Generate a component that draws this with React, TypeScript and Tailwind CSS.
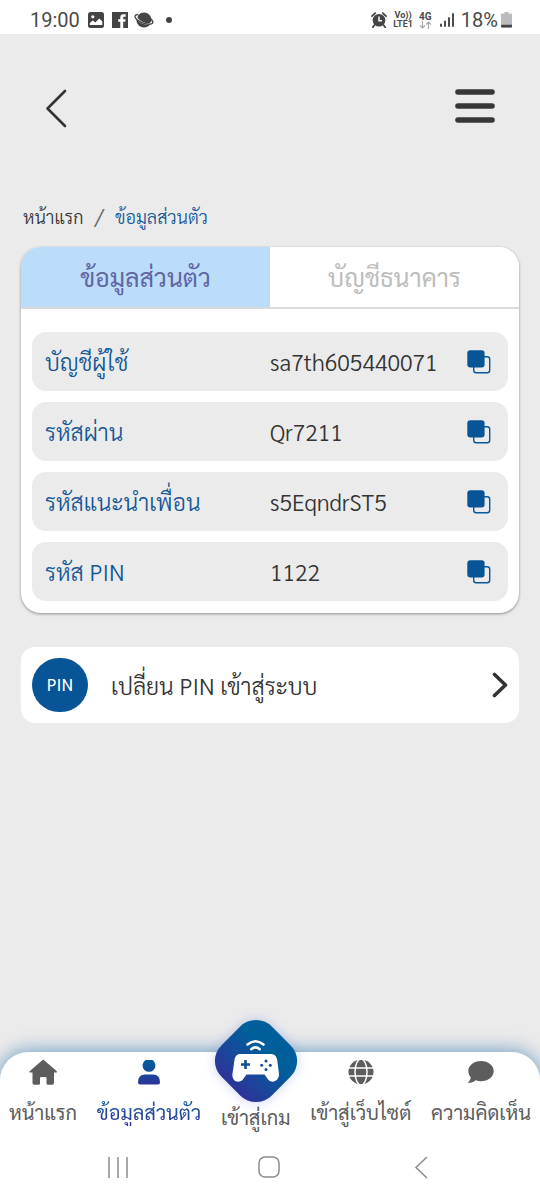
import { useState } from "react";

const accountRows = [
  { label: "บัญชีผู้ใช้", value: "sa7th605440071" },
  { label: "รหัสผ่าน", value: "Qr7211" },
  { label: "รหัสแนะนำเพื่อน", value: "s5EqndrST5" },
  { label: "รหัส PIN", value: "1122" },
];

function StatusBar() {
  return (
    <div className="flex h-[34px] items-center justify-between bg-white pt-[6px] pr-[28px] pl-[30px] font-[Roboto,sans-serif] text-[20px] font-normal text-[#4a4a4a]">
      <div className="flex items-center gap-[8px]">
        <span>19:00</span>
        <svg width="16" height="16" viewBox="0 0 16 16" aria-hidden="true">
          <rect width="16" height="16" rx="2.5" fill="#444" />
          <circle cx="4.8" cy="4.8" r="1.6" fill="#fff" />
          <path d="M1.8 13V11l3-2.5 2.5 2 4-4 3 3V13z" fill="#fff" />
        </svg>
        <svg width="16" height="16" viewBox="0 0 16 16" aria-hidden="true">
          <rect width="16" height="16" fill="#444" />
          <path d="M8.3 16V9.8H6.2V7.2h2.1V5.5C8.3 3.3 9.5 2.2 11.5 2.2h2.2v2.5h-1.4c-.8 0-1.1.4-1.1 1.1v1.4h2.4l-.4 2.6h-2V16z" fill="#fff" />
        </svg>
        <svg width="20" height="17" viewBox="0 0 20 17" className="-ml-[2px]" aria-hidden="true">
          <circle cx="10" cy="8" r="7.6" fill="#444" />
          <path d="M3.500 3.500C1 5 3.500 8.500 8.500 10.800c4.500 2 9 2 8.800-.8" fill="none" stroke="#fff" strokeWidth="1.800" />
          <path d="M4 2.500C.8 2.700-.2 4.500 2.500 7.200c3.500 3.500 11.500 6.200 15.300 4.500 2-1 .9-3.200-.8-4.800" fill="none" stroke="#444" strokeWidth="1.300" />
        </svg>
        <span className="ml-[4px] size-[6px] rounded-full bg-[#444]" />
      </div>
      <div className="flex items-center">
        <svg width="16" height="16" viewBox="0 0 16 16" aria-hidden="true">
          <circle cx="8" cy="8.300" r="6.300" fill="#444" />
          <path d="M1 4.200 4.200 1.200M15 4.200l-3.200-3M3.500 13l-1.700 2.200M12.500 13l1.700 2.200" stroke="#444" strokeWidth="1.800" strokeLinecap="round" />
          <path d="M8 4.500v4.200h3" stroke="#fff" strokeWidth="1.500" fill="none" />
        </svg>
        <span className="ml-[6px] flex flex-col items-center text-[9px] leading-[9px] font-bold">
          <span>Vo))</span>
          <span>LTE1</span>
        </span>
        <span className="ml-[6px] flex flex-col items-center text-[10px] leading-[9px] font-bold">
          <span>4G</span>
          <svg width="13" height="8" viewBox="0 0 13 8" fill="none" stroke="#aaa" strokeWidth="1.200" aria-hidden="true">
            <path d="M3.500 0v7M1 4.500 3.500 7 6 4.500M9.500 8V1M7 3.500 9.500 1 12 3.500" />
          </svg>
        </span>
        <svg className="ml-[8px]" width="14" height="14" viewBox="0 0 14 14" stroke="#444" strokeWidth="1.900" strokeLinecap="round" aria-hidden="true">
          <path d="M1 11.500V13M5 8.500V13M9 5v8M13 1v12" />
        </svg>
        <span className="ml-[7px]">18%</span>
        <svg className="ml-[3px]" width="11" height="16" viewBox="0 0 11 16" aria-hidden="true">
          <path d="M3.500 0h4v1.500H10q1 0 1 1V14.500q0 1-1 1H1q-1 0-1-1V2.500q0-1 1-1h2.500z" fill="#bbb" />
          <path d="M0 12.800h11v1.700q0 1-1 1H1q-1 0-1-1z" fill="#444" />
        </svg>
      </div>
    </div>
  );
}

function Header() {
  return (
    <header className="flex items-start justify-between px-[42px] pt-[48px]">
      <button type="button" aria-label="ย้อนกลับ" className="flex h-[52px] items-center pl-[3px]">
        <svg width="23" height="40" viewBox="0 0 23 40" fill="none" stroke="#333" strokeWidth="2.600" strokeLinecap="round" strokeLinejoin="round">
          <path d="M20 3 2.500 20.500 20 38" />
        </svg>
      </button>
      <button type="button" aria-label="เมนู" className="flex h-[48px] items-center pr-[3px]">
        <svg width="40" height="36" viewBox="0 0 40 36" stroke="#373737" strokeWidth="5.600" strokeLinecap="round">
          <path d="M3 4h34M3 18h34M3 32h34" />
        </svg>
      </button>
    </header>
  );
}

function CopyIcon() {
  return (
    <svg width="24" height="24" viewBox="0 0 24 24" aria-hidden="true">
      <rect x="6.700" y="6.700" width="16" height="16" rx="2.500" fill="none" stroke="#0b5796" strokeWidth="1.400" />
      <rect x="0.300" y="0.300" width="17.300" height="17.300" rx="3" fill="#075596" />
    </svg>
  );
}

function AccountCard() {
  const [tab, setTab] = useState(0);
  const tabs = ["ข้อมูลส่วนตัว", "บัญชีธนาคาร"];
  return (
    <section className="mt-[16px] overflow-hidden rounded-[20px] bg-white shadow-[0_1px_3px_rgba(0,0,0,0.4)]">
      <div role="tablist" className="grid grid-cols-2 border-b-2 border-[#d9dbdd]">
        {tabs.map((name, index) => (
          <button
            key={name}
            type="button"
            role="tab"
            aria-selected={tab === index}
            onClick={() => setTab(index)}
            className={
              tab === index
                ? "h-[60px] bg-[#bbddfa] text-[25px] font-normal text-[#6264a3]"
                : "h-[60px] bg-white text-[25px] font-normal text-[#bdbdbd]"
            }
          >
            {name}
          </button>
        ))}
      </div>
      <dl className="flex flex-col gap-[11px] px-[11px] pt-[23px] pb-[12px]">
        {accountRows.map((row) => (
          <div key={row.label} className="flex h-[59px] items-center rounded-[14px] bg-[#ebebeb] pr-[17px] pl-[13px] text-[23px]">
            <dt className="w-1/2 text-[#145696]">{row.label}</dt>
            <dd className="flex flex-1 items-center justify-between pl-[2px] text-[#333]">
              {row.value}
              <button type="button" aria-label={"คัดลอก " + row.label}>
                <CopyIcon />
              </button>
            </dd>
          </div>
        ))}
      </dl>
    </section>
  );
}

function GameBadge() {
  return (
    <svg width="84" height="84" viewBox="0 0 84 84" aria-hidden="true" className="-mx-2 max-w-none shrink-0 drop-shadow-[0_0_6px_rgba(46,80,220,0.25)]">
      <defs>
        <linearGradient id="badge" x1="0.5" y1="0.3" x2="0.5" y2="1">
          <stop offset="0" stopColor="#005e9b" />
          <stop offset="1" stopColor="#2e3399" />
        </linearGradient>
      </defs>
      <rect x="6.5" y="6.5" width="71" height="71" rx="22" transform="rotate(45 42 42)" fill="url(#badge)" />
      <g transform="translate(-1.5 0.5)">
        <path d="M35 25q8-6.500 16 0M38.800 29.700q4.200-3.500 8.400 0" fill="none" stroke="#fff" strokeWidth="2.600" strokeLinecap="round" />
        <path d="M28 34.500h30c4 0 6 2 6.700 6l1.700 13c.9 7.500-6 11-10.400 7L52 55H34l-4 5.500c-5 4-11 .5-10-6.500l2-13.500c.7-4 2.500-6 6-6z" fill="#fff" />
        <path d="M33 40.500v9M28.500 45h9" stroke="#174d96" strokeWidth="2.600" />
        <g fill="#174d96">
          <circle cx="53.500" cy="41.500" r="1.500" />
          <circle cx="53.500" cy="50" r="1.500" />
          <circle cx="49.200" cy="45.800" r="1.500" />
          <circle cx="57.800" cy="45.800" r="1.500" />
        </g>
      </g>
    </svg>
  );
}

function BottomNav() {
  const item = "flex flex-col items-center pt-[6px] text-[20px] font-normal whitespace-nowrap text-[#5d5d5d]";
  return (
    <nav className="mt-auto flex h-[86px] justify-between rounded-t-[28px] bg-white px-[9px] shadow-[0_0_20px_rgba(0,90,156,0.6)]">
      <a href="#home" className={item}>
        <svg width="30" height="28" viewBox="0 0 30 28" fill="#5d5d5d" aria-hidden="true">
          <path d="M14.300 2.200q.9-.8 1.800 0L28.500 13q1.300 1.500-.7 1.500H26V25q0 1.700-1.700 1.700h-4.500q-1.300 0-1.300-1.300V20q0-1-1-1H13q-1 0-1 1v5.400q0 1.300-1.300 1.300H6.200q-1.700 0-1.700-1.700V14.500H2.600q-2 0-.7-1.500z" />
        </svg>
        <span className="mt-[12px] leading-[28px]">หน้าแรก</span>
      </a>
      <a href="#profile" className={item}>
        <svg width="24" height="28" viewBox="0 0 24 28" aria-hidden="true">
          <defs>
            <linearGradient id="person" x1="0" y1="2" x2="0" y2="27" gradientUnits="userSpaceOnUse">
              <stop stopColor="#005e9b" />
              <stop offset="1" stopColor="#2e3399" />
            </linearGradient>
          </defs>
          <path d="M8.500 2h7q3 2 3 5.300a6.500 6.500 0 0 1-13 0Q5.500 4 8.500 2zM1 24.500q0-8 7-8h8q7 0 7 8 0 2-2 2H3q-2 0-2-2z" fill="url(#person)" />
        </svg>
        <span className="mt-[12px] bg-linear-to-b from-[#005e9b] to-[#2e3399] bg-clip-text leading-[28px] text-transparent">ข้อมูลส่วนตัว</span>
      </a>
      <a href="#games" className="-mt-[33px] flex flex-col items-center text-[20px] font-normal whitespace-nowrap text-[#5d5d5d]">
        <GameBadge />
        <span className="leading-[28px]">เข้าสู่เกม</span>
      </a>
      <a href="#website" className={item}>
        <svg width="26" height="28" viewBox="0 0 26 28" aria-hidden="true">
          <circle cx="13" cy="14" r="12.500" fill="#5d5d5d" />
          <path d="M0 10h26M0 18h26" stroke="#fff" strokeWidth="1.500" />
          <ellipse cx="13" cy="14" rx="6" ry="13" stroke="#fff" strokeWidth="1.500" fill="none" />
        </svg>
        <span className="mt-[12px] leading-[28px]">เข้าสู่เว็บไซต์</span>
      </a>
      <a href="#feedback" className={item}>
        <svg width="28" height="28" viewBox="0 0 28 28" fill="#5d5d5d" aria-hidden="true">
          <path d="M14 3c7.200 0 12.700 4.500 12.700 10S21.200 23.300 14 23.300c-2 0-3.800-.3-5.400-1C6.500 24 4 25 1.800 25q-1-.2-.3-1C2.800 22.500 3.500 21 3.800 19.500 2.200 17.700 1.300 15.500 1.300 13 1.300 7.500 6.800 3 14 3z" />
        </svg>
        <span className="mt-[12px] leading-[28px]">ความคิดเห็น</span>
      </a>
    </nav>
  );
}

function SystemNav() {
  return (
    <div className="grid h-[62px] grid-cols-3 justify-items-center bg-white px-[42px] pt-[17px]">
      <button type="button" aria-label="แอปล่าสุด" className="size-[24px]">
        <svg width="24" height="24" viewBox="0 0 24 24" stroke="#8c8c8c" strokeWidth="1.500">
          <path d="M3 2v21M12 2v21M21 2v21" />
        </svg>
      </button>
      <button type="button" aria-label="หน้าหลัก" className="size-[24px]">
        <svg width="24" height="24" viewBox="0 0 24 24" fill="none" stroke="#8c8c8c" strokeWidth="1.500">
          <rect x="1" y="2" width="20" height="20" rx="6" />
        </svg>
      </button>
      <button type="button" aria-label="กลับ" className="size-[24px]">
        <svg width="24" height="24" viewBox="0 0 24 24" fill="none" stroke="#8c8c8c" strokeWidth="1.500">
          <path d="M17 2 6 12.500 17 23" />
        </svg>
      </button>
    </div>
  );
}

export default function App() {
  return (
    <div className="flex min-h-screen flex-col bg-[#ebebeb] font-['Sarabun','Noto_Sans','Noto_Sans_Thai_Looped','Noto_Sans_Thai',sans-serif] font-light">
      <StatusBar />
      <Header />
      <main className="px-[21px] pb-[60px]">
        <nav aria-label="เส้นทาง" className="mt-[67px] flex h-[30px] items-center gap-[11px] pl-[2px] text-[18px] text-[#333]">
          <a href="#home">หน้าแรก</a>
          <span className="text-[24px] text-[#666]">/</span>
          <a href="#profile" className="text-[#145696]">ข้อมูลส่วนตัว</a>
        </nav>
        <AccountCard />
        <button type="button" className="mt-[34px] flex h-[76px] w-full items-center rounded-[14px] bg-white px-[11px] text-[23px] text-[#333]">
          <span className="flex h-[54px] w-[56px] items-center justify-center rounded-full bg-[#075596] text-[17px] font-normal text-white">PIN</span>
          <span className="ml-[23px]">เปลี่ยน PIN เข้าสู่ระบบ</span>
          <svg className="ml-auto" width="16" height="26" viewBox="0 0 16 26" fill="none" stroke="#333" strokeWidth="3.600" strokeLinecap="round" strokeLinejoin="round" aria-hidden="true">
            <path d="M2.500 2.500 13.500 13 2.500 23.500" />
          </svg>
        </button>
      </main>
      <BottomNav />
      <SystemNav />
    </div>
  );
}
